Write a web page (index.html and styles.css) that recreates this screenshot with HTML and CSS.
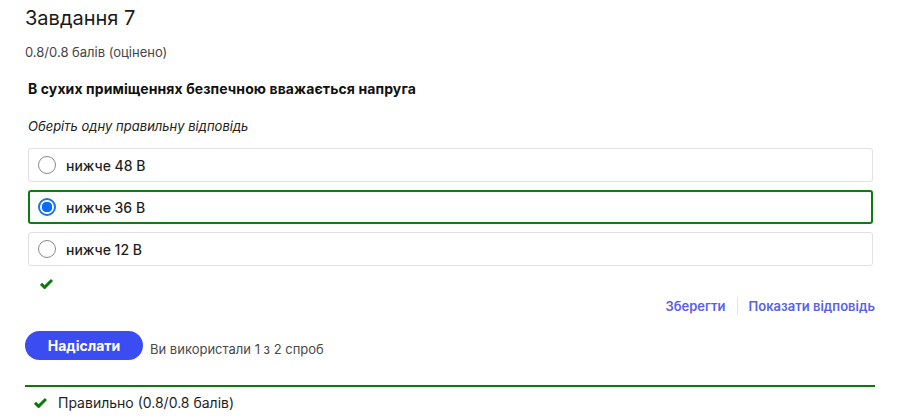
FILE: index.html
```html
<!DOCTYPE html>
<html lang="uk">
<head>
    <meta charset="UTF-8">
    <meta name="viewport" content="width=device-width, initial-scale=1.0">
    <title>Завдання 7</title>
    <link rel="stylesheet" href="styles.css">
</head>
<body>

    <!-- Problem -->
    <div class="problem">
        <h2 class="problem-title">Завдання 7</h2>
        <div class="problem-score">0.8/0.8 балів (оцінено)</div>

        <div class="question">
            <p class="question-text">В сухих приміщеннях безпечною вважається напруга</p>
            <p class="question-hint">Оберіть одну правильну відповідь</p>

            <div class="choices">
                <label class="choice">
                    <span class="radio"></span>
                    <span class="choice-label">нижче 48 В</span>
                </label>
                <label class="choice choice-correct">
                    <span class="radio radio-checked"></span>
                    <span class="choice-label">нижче 36 В</span>
                </label>
                <label class="choice">
                    <span class="radio"></span>
                    <span class="choice-label">нижче 12 В</span>
                </label>
            </div>

            <div class="status-icon">
                <svg width="13" height="11" viewBox="0 0 13 11"><path d="M1 5.8 L4.6 9.4 L12 2" fill="none" stroke="#0b7a0b" stroke-width="3"/></svg>
            </div>
        </div>

        <!-- Actions -->
        <div class="action-links">
            <a href="#">Зберегти</a>
            <span class="divider"></span>
            <a href="#">Показати відповідь</a>
        </div>

        <div class="submit-row">
            <button class="submit-btn">Надіслати</button>
            <span class="attempts">Ви використали 1 з 2 спроб</span>
        </div>

        <!-- Notification -->
        <div class="notification">
            <svg width="13" height="11" viewBox="0 0 13 11"><path d="M1 5.8 L4.6 9.4 L12 2" fill="none" stroke="#0b7a0b" stroke-width="3"/></svg>
            <span>Правильно (0.8/0.8 балів)</span>
        </div>
    </div>

</body>
</html>
```

FILE: styles.css
```css
/* General Styles */
* {
    margin: 0;
    padding: 0;
    box-sizing: border-box;
}
body {
    background: #ffffff;
    color: #1f1f1f;
    font-family: Inter, "Noto Sans", sans-serif;
}

/* Problem */
.problem {
    padding: 6px 25px 0 25px;
}
.problem-title {
    font-size: 20px;
    font-weight: 400;
    line-height: 24px;
    color: #1a1a1a;
}
.problem-score {
    margin-top: 14px;
    font-size: 13px;
    line-height: 17px;
    color: #454545;
}

/* Question */
.question {
    padding: 0 2px 0 3px;
}
.question-text {
    margin-top: 18px;
    font-size: 14px;
    font-weight: 700;
    line-height: 20px;
    letter-spacing: 0.1px;
    color: #111111;
}
.question-hint {
    margin-top: 18px;
    font-size: 13px;
    font-style: italic;
    line-height: 18px;
    color: #222222;
}

/* Choices */
.choices {
    margin-top: 13px;
    display: flex;
    flex-direction: column;
    gap: 8px;
}
.choice {
    display: flex;
    align-items: center;
    height: 34px;
    padding: 0 10px 0 9px;
    border: 1px solid #e1e1e1;
    border-radius: 3px;
    cursor: pointer;
}
.choice-correct {
    border: 2px solid #0e7c12;
    padding-left: 8px;
}
.radio {
    width: 18px;
    height: 18px;
    border: 1px solid #8a8a8a;
    border-radius: 50%;
    flex-shrink: 0;
}
.radio-checked {
    border: 2px solid #1a73f5;
    background: radial-gradient(circle, #0a6cf5 0 5px, #ffffff 5.5px);
}
.choice-label {
    margin-left: 10px;
    font-size: 14px;
    font-weight: 500;
    color: #1f1f1f;
}

.status-icon {
    margin: 7px 0 0 12px;
    height: 11px;
}

/* Actions */
.action-links {
    margin-top: 13px;
    display: flex;
    justify-content: flex-end;
    align-items: center;
}
.action-links a {
    color: #5861ec;
    font-size: 13px;
    font-weight: 600;
    text-decoration: none;
}
.divider {
    width: 1px;
    height: 18px;
    background: #e4e4e4;
    margin: 0 11px;
}

.submit-row {
    margin-top: 16px;
    display: flex;
    align-items: center;
}
.submit-btn {
    width: 118px;
    height: 29px;
    border: none;
    border-radius: 15px;
    background: #3c4cf3;
    color: #ffffff;
    font-family: Inter, "Noto Sans", sans-serif;
    font-size: 14px;
    font-weight: 700;
    cursor: pointer;
}
.attempts {
    margin: 7px 0 0 7px;
    font-size: 13px;
    color: #4a4a4a;
}

/* Notification */
.notification {
    margin-top: 25px;
    border-top: 2px solid #0b7a0b;
    padding: 7px 0 0 9px;
    display: flex;
    align-items: center;
    gap: 11px;
    font-size: 14px;
    color: #1f1f1f;
}
```
